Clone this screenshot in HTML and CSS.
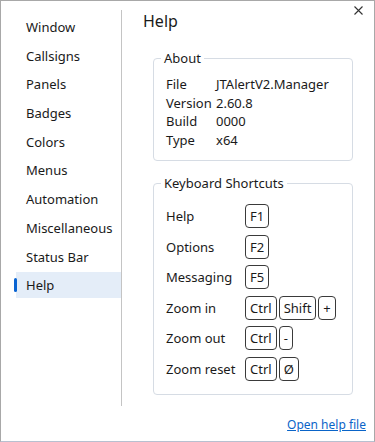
FILE: index.html
```html
<!DOCTYPE html>
<html lang="en">

<head>
  <meta charset="UTF-8" />
  <title>Help</title>
  <link rel="stylesheet" href="styles.css">
</head>

<body>

  <div class="window">
    <button class="btn-close" aria-label="Close">
      <svg width="9" height="9" viewBox="0 0 9 9">
        <path d="M0.5 0.5 L8.5 8.5 M8.5 0.5 L0.5 8.5" stroke="#333" stroke-width="1.1" fill="none" />
      </svg>
    </button>

    <div class="main">
      <!-- Menu kiri -->
      <ul class="nav">
        <li class="nav-item">Window</li>
        <li class="nav-item">Callsigns</li>
        <li class="nav-item">Panels</li>
        <li class="nav-item">Badges</li>
        <li class="nav-item">Colors</li>
        <li class="nav-item">Menus</li>
        <li class="nav-item">Automation</li>
        <li class="nav-item">Miscellaneous</li>
        <li class="nav-item">Status Bar</li>
        <li class="nav-item active">Help</li>
      </ul>

      <div class="content">
        <h2>Help</h2>

        <fieldset class="group group-about">
          <legend>About</legend>
          <div class="about-grid">
            <span>File</span><span>JTAlertV2.Manager</span>
            <span>Version</span><span>2.60.8</span>
            <span>Build</span><span>0000</span>
            <span>Type</span><span>x64</span>
          </div>
        </fieldset>

        <fieldset class="group group-keys">
          <legend>Keyboard Shortcuts</legend>
          <div class="key-row">
            <span class="key-label">Help</span>
            <span class="keys"><kbd>F1</kbd></span>
          </div>
          <div class="key-row">
            <span class="key-label">Options</span>
            <span class="keys"><kbd>F2</kbd></span>
          </div>
          <div class="key-row">
            <span class="key-label">Messaging</span>
            <span class="keys"><kbd>F5</kbd></span>
          </div>
          <div class="key-row">
            <span class="key-label">Zoom in</span>
            <span class="keys"><kbd>Ctrl</kbd><kbd>Shift</kbd><kbd>+</kbd></span>
          </div>
          <div class="key-row">
            <span class="key-label">Zoom out</span>
            <span class="keys"><kbd>Ctrl</kbd><kbd>-</kbd></span>
          </div>
          <div class="key-row">
            <span class="key-label">Zoom reset</span>
            <span class="keys"><kbd>Ctrl</kbd><kbd>Ø</kbd></span>
          </div>
        </fieldset>
      </div>
    </div>

    <div class="footer">
      <a href="#" class="help-link">Open help file</a>
    </div>
  </div>

</body>

</html>
```

FILE: styles.css
```css
body {
  margin: 0;
  font-family: 'Noto Sans', 'Open Sans', sans-serif;
  font-size: 13px;
  color: #1a1a1a;
  background: white;
}

.window {
  position: relative;
  width: 375px;
  height: 442px;
  box-sizing: border-box;
  border: 1px solid #a8a8a8;
  border-bottom-color: #b8c0d0;
  display: flex;
  flex-direction: column;
}

.btn-close {
  position: absolute;
  top: 3px;
  right: 10px;
  width: 12px;
  height: 12px;
  padding: 0;
  border: none;
  background: none;
  display: flex;
  align-items: center;
  justify-content: center;
}

.main {
  display: flex;
  flex: 1;
}

.nav {
  list-style: none;
  margin: 9px 0 0;
  padding: 4px 0 0 15px;
  width: 121px;
  height: 396px;
  box-sizing: border-box;
  border-right: 1px solid #c4c4c4;
}

.nav-item {
  position: relative;
  height: 26px;
  line-height: 26px;
  margin-bottom: 2.7px;
  padding-left: 10px;
}

.nav-item.active {
  background-color: #e4edf8;
}

.nav-item.active::before {
  content: "";
  position: absolute;
  left: -2px;
  top: 6px;
  width: 3px;
  height: 14px;
  border-radius: 2px;
  background-color: #0a64d2;
}

.content {
  flex: 1;
  padding: 0 21px 0 21px;
}

h2 {
  font-size: 16px;
  font-weight: normal;
  margin: 9px 0 17px;
  line-height: 22px;
}

.group {
  margin: 0 0 0 10px;
  border: 1px solid #d6dce4;
  border-radius: 4px;
  padding: 0 12px;
}

.group legend {
  padding: 0 3px;
  margin-left: -5px;
  line-height: 18px;
}

.group-about {
  padding-top: 8px;
  padding-bottom: 11px;
}

.about-grid {
  display: grid;
  grid-template-columns: 50px auto;
  line-height: 18.6px;
}

.group-keys {
  margin-top: 13px;
  padding-top: 12px;
  padding-bottom: 13px;
}

.key-row {
  display: flex;
  align-items: center;
  height: 24px;
  margin-bottom: 6.5px;
}

.key-row:last-child {
  margin-bottom: 0;
}

.key-label {
  width: 79px;
}

.keys {
  display: flex;
  gap: 2px;
}

kbd {
  font-family: inherit;
  font-size: 13px;
  min-width: 13px;
  height: 24px;
  line-height: 22px;
  box-sizing: border-box;
  padding: 0 4px;
  border: 1px solid #3a3a3a;
  border-radius: 4px;
  text-align: center;
}

.footer {
  text-align: right;
  padding: 0 8px 6px 0;
}

.help-link {
  color: #0a64c8;
  text-decoration: underline;
  font-size: 12px;
  line-height: 20px;
}
```
